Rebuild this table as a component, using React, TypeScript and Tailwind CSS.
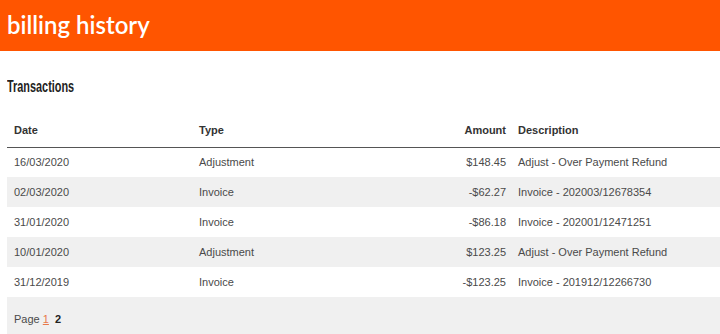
import React from "react";

type Txn = {
  date: string;
  type: string;
  amount: string;
  description: string;
};

const rows: Txn[] = [
  { date: "16/03/2020", type: "Adjustment", amount: "$148.45", description: "Adjust - Over Payment Refund" },
  { date: "02/03/2020", type: "Invoice", amount: "-$62.27", description: "Invoice - 202003/12678354" },
  { date: "31/01/2020", type: "Invoice", amount: "-$86.18", description: "Invoice - 202001/12471251" },
  { date: "10/01/2020", type: "Adjustment", amount: "$123.25", description: "Adjust - Over Payment Refund" },
  { date: "31/12/2019", type: "Invoice", amount: "-$123.25", description: "Invoice - 201912/12266730" },
];

export default function App() {
  return (
    <div className="w-[720px] h-[334px] bg-white overflow-hidden font-['Liberation_Sans',Arial,sans-serif]">
      <header className="h-[51px] bg-[#ff5500] flex items-center px-[7px]">
        <h1 className="text-white text-[24px] font-semibold font-['Lato',sans-serif] leading-none mt-[-2px]">
          billing history
        </h1>
      </header>

      <div className="pl-[7px]">
        {/* condensed heading face */}
        <h2 className="mt-[27px] h-[17px] text-[16px] leading-[17px] font-bold text-[#222]">
          <span className="inline-block origin-left scale-x-[0.68]">Transactions</span>
        </h2>

        <table className="mt-[18px] w-[713px] table-fixed border-collapse text-[11px] text-[#4a4a4a]">
          <colgroup>
            <col className="w-[185px]" />
            <col className="w-[248px]" />
            <col className="w-[72px]" />
            <col className="w-[208px]" />
          </colgroup>
          <thead>
            <tr className="h-[34px] border-b border-[#555] text-[#333]">
              <th className="text-left font-bold pl-[7px] pt-[1px]">Date</th>
              <th className="text-left font-bold pl-[7px] pt-[1px]">Type</th>
              <th className="text-right font-bold pr-[6px] pt-[1px]">Amount</th>
              <th className="text-left font-bold pl-[6px] pt-[1px]">Description</th>
            </tr>
          </thead>
          <tbody>
            {rows.map((r, i) => (
              <tr key={i} className={`h-[30px] ${i % 2 === 1 ? "bg-[#f0f0f0]" : "bg-white"}`}>
                <td className="pl-[7px]">{r.date}</td>
                <td className="pl-[7px]">{r.type}</td>
                <td className="text-right pr-[6px]">{r.amount}</td>
                <td className="pl-[6px]">{r.description}</td>
              </tr>
            ))}
            <tr className="h-[44px] bg-[#f0f0f0]">
              <td colSpan={4} className="pl-[7px]">
                Page{" "}
                <a href="#" className="text-[#e8784a] underline">1</a>
                <span className="ml-[6px] font-bold text-[#222]">2</span>
              </td>
            </tr>
          </tbody>
        </table>
      </div>
    </div>
  );
}
